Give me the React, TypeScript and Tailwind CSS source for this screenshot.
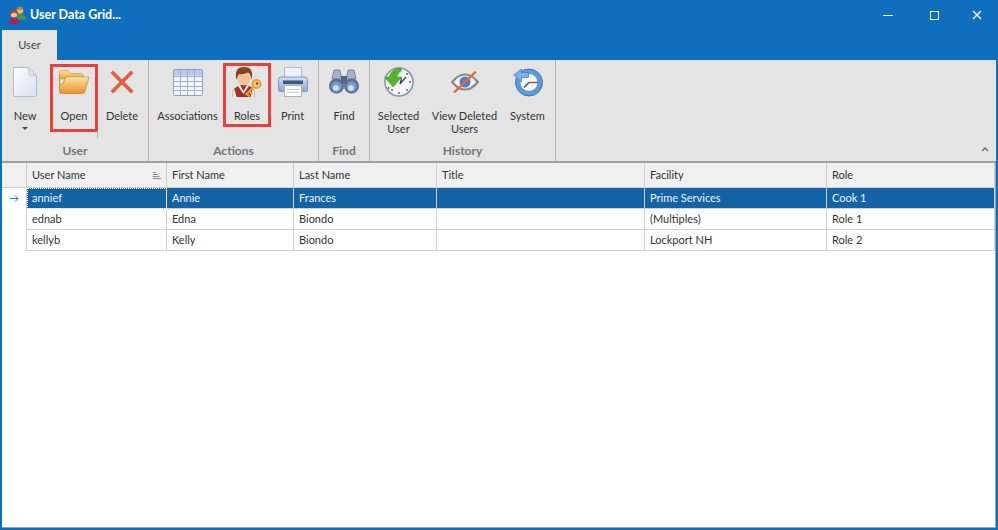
import type { ReactNode } from "react";

const columns = [
  { name: "User Name", w: "w-[140px]" },
  { name: "First Name", w: "w-[127px]" },
  { name: "Last Name", w: "w-[143px]" },
  { name: "Title", w: "w-[208px]" },
  { name: "Facility", w: "w-[182px]" },
  { name: "Role", w: "flex-1" },
];

const rows = [
  ["annief", "Annie", "Frances", "", "Prime Services", "Cook 1"],
  ["ednab", "Edna", "Biondo", "", "(Multiples)", "Role 1"],
  ["kellyb", "Kelly", "Biondo", "", "Lockport NH", "Role 2"],
];

function NewIcon() {
  return (
    <svg width="26" height="32" viewBox="0 0 26 32">
      <defs>
        <linearGradient id="pg" x1="0" y1="0" x2="1" y2="1">
          <stop offset="0" stopColor="#ffffff" />
          <stop offset="1" stopColor="#d8dff2" />
        </linearGradient>
      </defs>
      <path d="M1.500 1.500h15l8 8v20q0 1-1 1h-21q-1 0-1-1z" fill="url(#pg)" stroke="#b4bccf" />
      <path d="M16.500 1.500q1 6 8 8-5 1-7 0t-1-8z" fill="#dfe4f1" stroke="#b4bccf" strokeWidth="0.600" />
    </svg>
  );
}

function FolderIcon() {
  return (
    <svg width="30" height="24" viewBox="0 0 30 24">
      <defs>
        <linearGradient id="fa" x1="0" y1="0" x2="0" y2="1">
          <stop offset="0" stopColor="#fde08c" />
          <stop offset="1" stopColor="#e9a63f" />
        </linearGradient>
        <linearGradient id="fb" x1="0" y1="0" x2="0" y2="1">
          <stop offset="0" stopColor="#fde2a0" />
          <stop offset="1" stopColor="#e8912f" />
        </linearGradient>
      </defs>
      <path d="M0.500 3q0-2.500 2-2.500h6l3 3h11q2 0 2 2V9h-24z" fill="url(#fa)" stroke="#d9a04a" strokeWidth="0.700" />
      <path d="M7 7h23l-4 14q-.5 2.500-2.500 2.500H2q-1.500 0-1.500-2V14h3z" fill="url(#fb)" stroke="#c77f2a" strokeWidth="0.700" />
      <path d="M7.500 8h21" stroke="#fff2c4" strokeWidth="0.800" opacity="0.800" />
      <path d="M0.500 5v16" stroke="#d48c30" strokeWidth="1" />
    </svg>
  );
}

function DeleteIcon() {
  return (
    <svg width="24" height="24" viewBox="0 0 24 24">
      <path d="M3 3l18 18M21 3L3 21" stroke="#e0603f" strokeWidth="3.600" strokeLinecap="square" />
    </svg>
  );
}

function TableIcon() {
  const xs = [7, 14, 21];
  const ys = [7, 12, 17, 21];
  return (
    <svg width="30" height="27" viewBox="0 0 30 27">
      <rect x="0.500" y="0.500" width="29" height="26" rx="1.500" fill="#f3f6fc" stroke="#8ba1cb" />
      <rect x="1" y="1" width="28" height="5.500" fill="#b7c9e8" />
      {xs.map((x) => (
        <path key={x} d={`M${x}.5 1v25`} stroke="#9cb1d8" />
      ))}
      {ys.map((y) => (
        <path key={y} d={`M1 ${y}.5h28`} stroke="#9cb1d8" />
      ))}
    </svg>
  );
}

function RolesIcon() {
  return (
    <svg width="30" height="30" viewBox="0 0 30 30">
      <path d="M0.500 30v-4q0-5 8-8h7q7 3 7 8v4z" fill="#a92a2a" />
      <path d="M0.500 30v-4q0-2 2-4l2 8zM22.500 30v-4q0-2-2-4l-2 8z" fill="#e9e5e0" />
      <path d="M8 18l3.500 6 3.500-6 2 1-5.500 8L6 19z" fill="#f6f3ee" />
      <ellipse cx="12" cy="11" rx="6.500" ry="7.500" fill="#f3c49b" />
      <path d="M4.500 13Q1.500 0 12 0t7.500 13q-.5-6-3.500-7.500-5 2.500-9 1.500-1.500 2-2.500 6z" fill="#85431f" />
      <circle cx="24.500" cy="17" r="4" fill="#f6d27a" stroke="#e0a032" strokeWidth="2" />
      <circle cx="25" cy="16.500" r="1.200" fill="#a92a2a" />
      <path d="M21.500 20l-8 8M15.500 27.500l2 2M18 25l2 2" stroke="#e2a136" strokeWidth="2" />
    </svg>
  );
}

function PrintIcon() {
  return (
    <svg width="30" height="30" viewBox="0 0 30 30">
      <defs>
        <linearGradient id="pb" x1="0" y1="0" x2="0" y2="1">
          <stop offset="0" stopColor="#d5dff0" />
          <stop offset="1" stopColor="#8ea6cd" />
        </linearGradient>
      </defs>
      <rect x="6.500" y="0.500" width="17" height="11" fill="#eef1f8" stroke="#b4bccf" />
      <path d="M3 10h24q2.500 0 2.500 2.500V23q0 1.500-1.500 1.500H2Q.5 24.500.5 23V12.500Q.5 10 3 10z" fill="url(#pb)" stroke="#7e95bd" />
      <rect x="5" y="13.500" width="20" height="3.500" fill="#3f5884" />
      <rect x="6.500" y="18.500" width="17" height="11" fill="#ffffff" stroke="#a9b4c9" />
      <path d="M9 22.500h12M9 25.500h12" stroke="#c3cad8" />
    </svg>
  );
}

function FindIcon() {
  return (
    <svg width="30" height="26" viewBox="0 0 30 26">
      <path d="M5 1h6l1.500 9H3zM19 1h6l2 9h-9.500z" fill="#a7b1c2" stroke="#5f6c84" strokeWidth="0.700" />
      <rect x="12" y="7" width="6" height="8" fill="#57637a" />
      <circle cx="7.500" cy="17" r="7.500" fill="#5f6d88" />
      <circle cx="22.500" cy="17" r="7.500" fill="#5f6d88" />
      <circle cx="7.500" cy="17.500" r="5.200" fill="#6f9fe0" />
      <circle cx="22.500" cy="17.500" r="5.200" fill="#6f9fe0" />
      <circle cx="7" cy="19" r="2.800" fill="#d6e4f8" />
      <circle cx="22" cy="19" r="2.800" fill="#d6e4f8" />
    </svg>
  );
}

function ClockIcon() {
  return (
    <svg width="30" height="30" viewBox="0 0 30 30">
      <circle cx="15" cy="15" r="14" fill="#f4f6f8" stroke="#8a95a3" strokeWidth="1.600" />
      {[[15, 26], [26, 15], [23, 23], [8, 23], [4.500, 21], [23, 7]].map(([x, y]) => (
        <circle key={`${x}-${y}`} cx={x} cy={y} r="0.900" fill="#4a5563" />
      ))}
      <path d="M16 17l1.500-6M16 17l6-7" stroke="#3d4654" strokeWidth="1.300" fill="none" />
      <path d="M17 1Q8 1 5 10H0.500l8.500 10 9-10h-5q1-5 4.500-6z" fill="#55b42e" stroke="#3f9a23" strokeWidth="0.500" />
    </svg>
  );
}

function EyeIcon() {
  return (
    <svg width="28" height="22" viewBox="0 0 28 22">
      <path d="M1.200 11Q7 3.500 14 3.500T26.800 11Q21 18.500 14 18.500T1.200 11z" fill="#f1f1f1" stroke="#8a8a8a" strokeWidth="2.200" />
      <circle cx="14" cy="11" r="5.500" fill="#4d7fc0" />
      <path d="M3 21.500L25 .5" stroke="#e8673f" strokeWidth="2.400" />
    </svg>
  );
}

function SystemIcon() {
  return (
    <svg width="30" height="30" viewBox="0 0 30 30">
      <circle cx="16" cy="15.500" r="13.500" fill="#5d9ad8" stroke="#3f78b8" />
      <circle cx="16" cy="15.500" r="8.500" fill="#f5f7f9" />
      <path d="M16 15.500h9" stroke="#c8322c" strokeWidth="1.200" />
      <path d="M16 15.500l-5 5" stroke="#3d4654" strokeWidth="1.300" />
      <path d="M0.500 8l8-6v3.500h7v5h-7V15z" fill="#7bb1e6" stroke="#3f78b8" strokeWidth="0.700" />
    </svg>
  );
}

function UsersIcon() {
  return (
    <svg width="18" height="18" viewBox="0 0 18 18">
      <circle cx="12" cy="4.500" r="3.300" fill="#e9b98c" />
      <path d="M8.500 4Q9 .5 12 .5T15.500 4q-3.500-1.200-7 0z" fill="#a08a3a" />
      <path d="M9 13q0-5 3.500-5t5 3v3z" fill="#4c9a3c" />
      <circle cx="6" cy="8" r="3.500" fill="#efc19a" />
      <path d="M2 9Q1.500 3.500 6 3.500T10 9Q8 6 6 6.500T2 9z" fill="#a8481f" />
      <path d="M1 18q0-6.500 5-6.500t5 6.500z" fill="#a82466" />
    </svg>
  );
}

function RibbonButton({
  width,
  icon,
  label,
  second,
  caret,
  marked,
}: {
  width: string;
  icon: ReactNode;
  label: string;
  second?: string;
  caret?: boolean;
  marked?: string;
}) {
  return (
    <div className={`${width} flex flex-col items-center`}>
      <div className={`flex w-full flex-col items-center ${marked ?? ""}`}>
        <div className="mt-[2px] flex h-[32px] items-center justify-center">{icon}</div>
        <div className="mt-[11px] whitespace-nowrap text-center leading-[13px]">
          <div>{label}</div>
          {second && <div>{second}</div>}
        </div>
        {caret && (
          <div className="mt-[5px] h-0 w-0 border-x-[3px] border-t-[3px] border-x-transparent border-t-[#444]" />
        )}
      </div>
    </div>
  );
}

function RibbonGroup({
  title,
  width,
  children,
}: {
  title: string;
  width: string;
  children: ReactNode;
}) {
  return (
    <div className={`${width} flex flex-col border-r border-[#b4b4b4]`}>
      <div className="flex h-[82px] pt-[4px]">{children}</div>
      <div className="text-center text-[12px] font-bold leading-[17px] text-[#747474]">{title}</div>
    </div>
  );
}

export default function App() {
  return (
    <div className="flex h-[530px] w-[998px] flex-col overflow-hidden border-x-2 border-b-2 border-[#106ebe] bg-white font-['Lato','Liberation_Sans',sans-serif] text-[11px] text-[#333]">
      {/* Title bar */}
      <div className="flex h-[30px] items-center bg-[#106ebe] pl-[6px] text-white">
        <UsersIcon />
        <span className="ml-[4px] text-[12.500px] font-bold">User Data Grid...</span>
        <div className="ml-auto flex items-center">
          <svg width="10" height="10" viewBox="0 0 10 10" className="mr-[37px]">
            <path d="M0 5.500h10" stroke="#fff" />
          </svg>
          <svg width="9" height="9" viewBox="0 0 9 9" className="mr-[33px]">
            <rect x="0.500" y="0.500" width="8" height="8" fill="none" stroke="#fff" />
          </svg>
          <svg width="10" height="10" viewBox="0 0 10 10" className="mr-[14px]">
            <path d="M1 1l8 8M9 1L1 9" stroke="#fff" strokeWidth="1.300" />
          </svg>
        </div>
      </div>

      {/* Tabs */}
      <div className="flex h-[30px] bg-[#106ebe]">
        <div className="flex w-[55px] items-center justify-center bg-[#e4e4e4] text-[#444]">User</div>
      </div>

      {/* Ribbon */}
      <div className="relative flex h-[103px] shrink-0 border-b-2 border-[#a0a0a0] bg-[#e4e4e4]">
        <RibbonGroup title="User" width="w-[147px]">
          <RibbonButton width="w-[46px]" icon={<NewIcon />} label="New" caret />
          <div className="w-[2px]" />
          <RibbonButton
            width="w-[48px]"
            icon={<FolderIcon />}
            label="Open"
            marked="h-[68px] outline-[3px] -outline-offset-[3px] outline-[#e8403e]"
          />
          <RibbonButton width="w-[48px]" icon={<DeleteIcon />} label="Delete" />
        </RibbonGroup>
        <RibbonGroup title="Actions" width="w-[170px]">
          <div className="w-[3px]" />
          <RibbonButton width="w-[71px]" icon={<TableIcon />} label="Associations" />
          <RibbonButton
            width="w-[48px]"
            icon={<RolesIcon />}
            label="Roles"
            marked="h-[64px] -mt-[1px] pt-[1px] outline-[3px] -outline-offset-[3px] outline-[#e8403e]"
          />
          <RibbonButton width="w-[43px]" icon={<PrintIcon />} label="Print" />
        </RibbonGroup>
        <RibbonGroup title="Find" width="w-[51px]">
          <RibbonButton width="w-[50px]" icon={<FindIcon />} label="Find" />
        </RibbonGroup>
        <RibbonGroup title="History" width="w-[186px]">
          <RibbonButton width="w-[57px]" icon={<ClockIcon />} label="Selected" second="User" />
          <RibbonButton width="w-[75px]" icon={<EyeIcon />} label="View Deleted" second="Users" />
          <RibbonButton width="w-[51px]" icon={<SystemIcon />} label="System" />
        </RibbonGroup>
        <div className="absolute left-[95px] top-[71px] h-[7px] w-px bg-[#b4b4b4]" />
        <svg width="8" height="5" viewBox="0 0 8 5" className="absolute bottom-[9px] right-[7px]">
          <path d="M1 4l3-3 3 3" fill="none" stroke="#666" strokeWidth="1.300" />
        </svg>
      </div>

      {/* Grid */}
      <div className="flex-1 border-r border-b border-[#a0a0a0]">
        <div className="flex h-[25px] border-b border-[#d0d0d0] bg-[#f0f0f0]">
          <div className="w-[25px] border-r border-[#d0d0d0]" />
          {columns.map((c, i) => (
            <div key={c.name} className={`${c.w} flex items-center border-r border-[#d0d0d0] pl-[5px]`}>
              {c.name}
              {i === 0 && (
                <svg width="8" height="7" viewBox="0 0 8 7" className="ml-auto mr-[5px]">
                  <path d="M0 .5h3M0 2.500h5M0 4.500h6.500M0 6.500h8" stroke="#888" />
                </svg>
              )}
            </div>
          ))}
        </div>
        {rows.map((row, r) => (
          <div key={row[0]} className="flex h-[21px]">
            <div className="flex w-[25px] items-center justify-center border-r border-[#d0d0d0]">
              {r === 0 && (
                <svg width="9" height="7" viewBox="0 0 9 7">
                  <path d="M0 3.500h8M5 .5l3 3-3 3" fill="none" stroke="#2a75c0" />
                </svg>
              )}
            </div>
            {row.map((cell, c) => (
              <div
                key={columns[c].name}
                className={`${columns[c].w} flex items-center border-r border-b border-[#d0d0d0] pl-[5px] ${
                  r === 0 ? "bg-[#1463a5] text-[#eef4fa]" : ""
                } ${r === 0 && c === 0 ? "outline-1 -outline-offset-1 outline-dotted outline-white" : ""}`}
              >
                {cell}
              </div>
            ))}
          </div>
        ))}
      </div>
    </div>
  );
}
